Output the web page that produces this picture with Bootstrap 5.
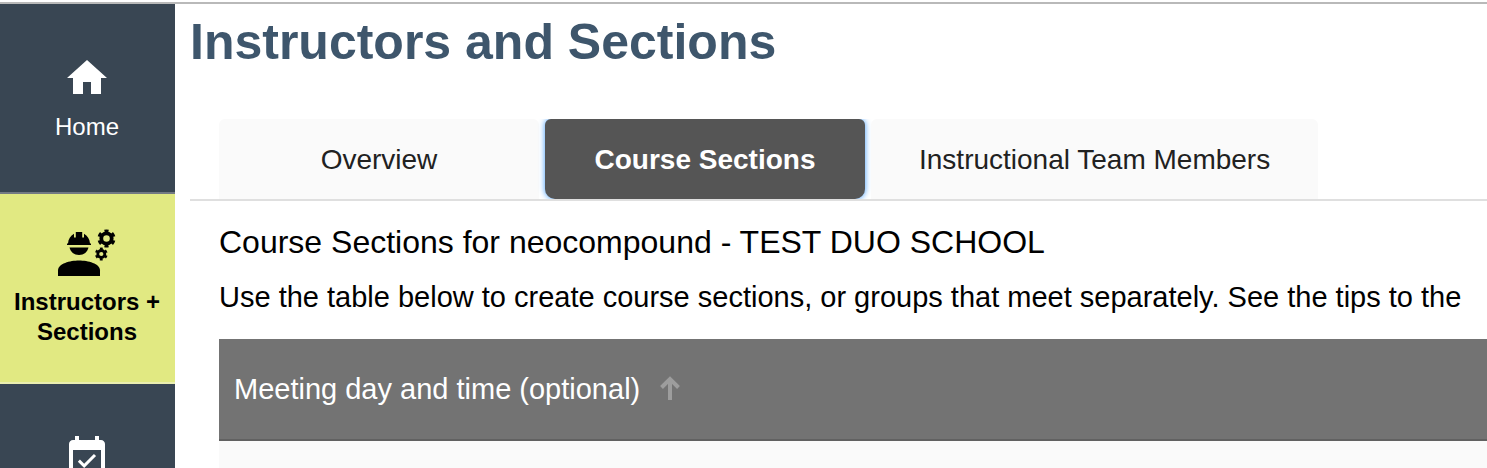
<!DOCTYPE html>
<html lang="en">
<head>
<meta charset="utf-8">
<meta name="viewport" content="width=device-width, initial-scale=1">
<title>Instructors and Sections</title>
<link href="https://cdn.jsdelivr.net/npm/bootstrap@5.3.0/dist/css/bootstrap.min.css" rel="stylesheet">
<style>
body { font-family: "Liberation Sans", Arial, sans-serif; color: #000; }
.app-shell { border-top: 2px solid #b9b9b9; margin-top: 2px; height: calc(100vh - 2px); }
.side-nav { width: 175px; background: #394653; }
.side-link { height: 190px; font-size: 24px; line-height: 30px; color: #fff; border-bottom: 2px solid #737a83; padding-top: 50px; padding-right: 1px; }
.side-link svg { margin-bottom: 10px; }
.side-link.active { background: #e1e982; color: #000; font-weight: 700; border-color: #eaeeb0; padding-top: 34px; }
.side-link.active svg { margin-bottom: 9px; }
.page-main { padding-left: 15px; }
.page-title { font-size: 50px; line-height: 60px; font-weight: 700; color: #3e566c; padding-top: 8px; }
.section-tabs { margin-top: 47px; padding-left: 29px; gap: 6px; border-bottom: 2px solid #dfdfdf; overflow: hidden; }
.section-tabs .nav-link { min-width: 320px; height: 80px; margin: 0; padding: 2px 48px 0; border: 0; border-radius: 6px 6px 0 0; background: #fafafa; color: #212121; font-size: 28px; line-height: 40px; }
.section-tabs .nav-link.active { background: #555; color: #fff; font-weight: 700; border-radius: 6px 6px 10px 10px; box-shadow: 0 0 6px #3b99fc; }
.panel { padding-left: 29px; }
.panel-title { font-size: 32px; line-height: 40px; margin: 21px 0 0; }
.panel-text { font-size: 29px; line-height: 40px; margin: 15px 0 22px; }
.sections-table th { height: 101px; padding: 0 15px 1px; background: #737373; border-bottom: 2px solid #616161; vertical-align: middle; font-weight: 400; }
.sections-table td { height: 100px; background: #fafafa; border: 0; }
.sort-btn { color: #fff; font-size: 29px; line-height: 40px; gap: 20px; }
.sort-btn svg { margin-bottom: 2px; }
</style>
</head>
<body class="bg-white overflow-hidden">
<div class="app-shell d-flex overflow-hidden">
  <nav class="side-nav flex-shrink-0 d-flex flex-column" aria-label="Main">
    <a href="#" class="side-link flex-shrink-0 d-flex flex-column align-items-center text-center text-decoration-none">
      <svg width="48" height="48" viewBox="0 0 24 24" fill="currentColor" aria-hidden="true"><path d="M10 20v-6h4v6h5v-8h3L12 3 2 12h3v8z"/></svg>
      <span>Home</span>
    </a>
    <a href="#" class="side-link active flex-shrink-0 d-flex flex-column align-items-center text-center text-decoration-none" aria-current="page">
      <svg width="60" height="50" viewBox="0 0 60 50" fill="currentColor" aria-hidden="true">
        <path d="M1 48v-5.500C1 35.500 13 32.500 22 32.500s21 3 21 10V48z"/>
        <path d="M12.500 19.500h19c-1 4.500-4.500 7.500-9.500 7.500s-8.500-3-9.500-7.500z"/>
        <path d="M10 17v-1.500h1c.3-4.500 2.500-8 6-9.800V9.500h1.800V4h6.400v5.500H27V5.700c3.500 1.800 5.700 5.300 6 9.800h1V17z"/>
        <g fill="none" stroke="currentColor">
          <circle cx="49.500" cy="10.500" r="5.200" stroke-width="3.800"/>
          <circle cx="49.500" cy="10.500" r="7.500" stroke-width="3.200" pathLength="12" stroke-dasharray="1 1" transform="rotate(15 49.500 10.500)"/>
          <circle cx="44.300" cy="26" r="3.500" stroke-width="2.800"/>
          <circle cx="44.300" cy="26" r="5.200" stroke-width="2.400" pathLength="12" stroke-dasharray="1 1" transform="rotate(15 44.300 26)"/>
        </g>
      </svg>
      <span>Instructors +<br>Sections</span>
    </a>
    <a href="#" class="side-link flex-shrink-0 d-flex flex-column align-items-center text-center text-decoration-none" aria-label="Schedule">
      <svg width="48" height="48" viewBox="0 0 24 24" fill="currentColor" aria-hidden="true"><path d="M16.530 11.060 15.470 10l-4.880 4.880-2.120-2.120-1.060 1.060L10.590 17zM19 3h-1V1h-2v2H8V1H6v2H5c-1.110 0-2 .9-2 2v14c0 1.100.89 2 2 2h14c1.100 0 2-.9 2-2V5c0-1.100-.9-2-2-2zm0 16H5V8h14z"/></svg>
    </a>
  </nav>
  <main class="page-main flex-grow-1 overflow-hidden">
    <h1 class="page-title m-0">Instructors and Sections</h1>
    <div class="section-tabs nav nav-tabs flex-nowrap text-nowrap" role="tablist">
      <button type="button" class="nav-link" role="tab" aria-selected="false">Overview</button>
      <button type="button" class="nav-link active" role="tab" aria-selected="true">Course Sections</button>
      <button type="button" class="nav-link" role="tab" aria-selected="false">Instructional Team Members</button>
    </div>
    <section class="panel text-nowrap" role="tabpanel">
      <h2 class="panel-title fw-normal">Course Sections for neocompound - TEST DUO SCHOOL</h2>
      <p class="panel-text">Use the table below to create course sections, or groups that meet separately. See the tips to the</p>
      <table class="sections-table w-100">
        <thead><tr><th scope="col">
          <button type="button" class="sort-btn btn p-0 border-0 d-flex align-items-center">Meeting day and time (optional)
            <svg width="20" height="24" viewBox="0 0 20 24" fill="none" stroke="#9d9d9d" stroke-width="4" aria-hidden="true"><path d="M1.500 11.500 10 3l8.500 8.500M10 3v21"/></svg>
          </button>
        </th></tr></thead>
        <tbody><tr><td></td></tr></tbody>
      </table>
    </section>
  </main>
</div>
<script src="https://cdn.jsdelivr.net/npm/bootstrap@5.3.0/dist/js/bootstrap.bundle.min.js"></script>
</body>
</html>
